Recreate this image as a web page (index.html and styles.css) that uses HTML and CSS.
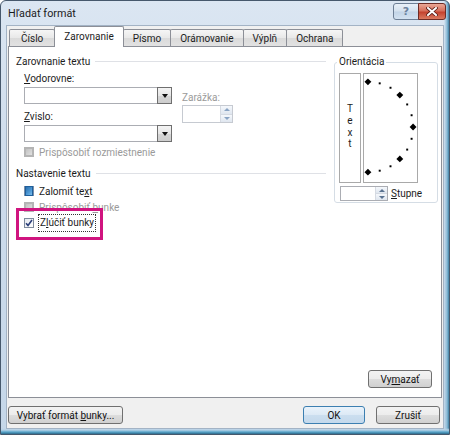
FILE: index.html
```html
<!DOCTYPE html>
<html lang="sk">
<head>
<meta charset="utf-8">
<title>Hľadať formát</title>
<link rel="stylesheet" href="styles.css">
</head>
<body>
<div class="window">
  <div class="titlebar">
    <span class="title">Hľadať formát</span>
    <div class="caption-buttons">
      <span class="cap-btn help">?</span>
      <span class="cap-btn close">
        <svg width="12" height="9" viewBox="0 0 12 9">
          <path d="M2 1 L10 8 M10 1 L2 8" stroke="#5a1d17" stroke-width="3.6" stroke-linecap="square"/>
          <path d="M2 1 L10 8 M10 1 L2 8" stroke="#fff" stroke-width="2" stroke-linecap="square"/>
        </svg>
      </span>
    </div>
  </div>

  <div class="client">
    <div class="tabs">
      <span class="tab">Číslo</span>
      <span class="tab active">Zarovnanie</span>
      <span class="tab">Písmo</span>
      <span class="tab">Orámovanie</span>
      <span class="tab">Výplň</span>
      <span class="tab">Ochrana</span>
    </div>

    <div class="panel">
      <div class="panel-main">
        <div class="left">
          <div class="group-head"><span>Zarovnanie textu</span></div>
          <div class="align-block">
            <div class="align-col">
              <span class="field-label"><u>V</u>odorovne:</span>
              <div class="combo"><span class="combo-field"></span><span class="combo-btn"><i class="tri"></i></span></div>
              <span class="field-label gap"><u>Z</u>vislo:</span>
              <div class="combo"><span class="combo-field"></span><span class="combo-btn"><i class="tri"></i></span></div>
            </div>
            <div class="indent-col">
              <span class="field-label disabled">Zarážka:</span>
              <div class="spin disabled-spin"><span class="spin-field"></span><span class="spin-btns"><i class="up"></i><i class="down"></i></span></div>
            </div>
          </div>
          <div class="check disabled first-check"><span class="cb indet"></span><span>Prispôsobiť rozmiestnenie</span></div>

          <div class="group-head second"><span>Nastavenie textu</span></div>
          <div class="check c1"><span class="cb indet blue"></span><span>Zalomiť te<u>x</u>t</span></div>
          <div class="check c2 disabled"><span class="cb indet"></span><span>Prispôsobiť <u>b</u>unke</span></div>
          <div class="check c2 marked">
            <span class="cb checked">
              <svg width="8" height="8" viewBox="0 0 8 8"><path d="M1 4.2 L3 6.4 L7 1" fill="none" stroke="#2b3f7a" stroke-width="1.6"/></svg>
            </span>
            <span class="focus">Z<u>l</u>účiť bunky</span>
            <span class="highlight"></span>
          </div>
        </div>

        <fieldset class="orient">
          <legend>Orientácia</legend>
          <div class="orient-boxes">
            <div class="vtext"><span>T</span><span>e</span><span>x</span><span>t</span></div>
            <div class="dial">
              <svg width="54" height="108" viewBox="0 0 54 108">
                <g fill="#000">
                  <path d="M4 3.5 L7.5 7 L4 10.5 L0.5 7 Z"/>
                  <path d="M36.5 17 L40 20.5 L36.5 24 L33 20.5 Z"/>
                  <path d="M50 49.5 L53.5 53 L50 56.5 L46.5 53 Z"/>
                  <path d="M36.5 82 L40 85.5 L36.5 89 L33 85.5 Z"/>
                  <path d="M4 95.5 L7.5 99 L4 102.5 L0.5 99 Z"/>
                  <rect x="15" y="7.5" width="2" height="2"/>
                  <rect x="26" y="12" width="2" height="2"/>
                  <rect x="43" y="29" width="2" height="2"/>
                  <rect x="47.5" y="40" width="2" height="2"/>
                  <rect x="47.5" y="64" width="2" height="2"/>
                  <rect x="43" y="75" width="2" height="2"/>
                  <rect x="26" y="92" width="2" height="2"/>
                  <rect x="15" y="96.5" width="2" height="2"/>
                </g>
              </svg>
            </div>
          </div>
          <div class="degree-row">
            <div class="spin"><span class="spin-field"></span><span class="spin-btns"><i class="up"></i><i class="down"></i></span></div>
            <span><u>S</u>tupne</span>
          </div>
        </fieldset>
      </div>

      <div class="panel-foot">
        <button class="btn clear"><span>Vy<u>m</u>azať</span></button>
      </div>
    </div>

    <div class="dialog-buttons">
      <button class="btn pick"><span>Vybrať formát <u>b</u>unky...</span></button>
      <span class="spacer"></span>
      <button class="btn ok"><span>OK</span></button>
      <button class="btn cancel"><span>Zrušiť</span></button>
    </div>
  </div>
</div>
</body>
</html>
```

FILE: styles.css
```css
* { box-sizing: border-box; }

html, body {
  margin: 0;
  padding: 0;
}

body {
  width: 450px;
  height: 435px;
  overflow: hidden;
  font-family: Roboto, "Noto Sans", sans-serif;
  font-size: 10px;
  color: #1c1c1c;
  background: #fff;
}

u { text-decoration: underline; text-underline-offset: 1px; }

/* ---------- window frame ---------- */
.window {
  width: 450px;
  height: 435px;
  border: 1px solid #46586c;
  border-radius: 6px 6px 0 0;
  display: flex;
  flex-direction: column;
  overflow: hidden;
  background:
    linear-gradient(to top, #2d6989 0, #58a6cb 2px, #b7d2e6 4px, rgba(183, 210, 230, 0) 6px),
    linear-gradient(to left, #3f7fa2 0, #8cbcd8 2px, rgba(140, 188, 216, 0) 5px),
    linear-gradient(to bottom, #dbe6f2, #cddbeb 40%, #c5d7e9);
}

.titlebar {
  height: 24px;
  flex: none;
  display: flex;
  align-items: center;
  padding-left: 7px;
}

.title {
  font-size: 10.8px;
  color: #1b1b1b;
}

.caption-buttons {
  margin-left: auto;
  align-self: flex-start;
  margin-top: 2px;
  margin-right: 3px;
  display: flex;
}

.cap-btn {
  height: 17px;
  display: flex;
  align-items: center;
  justify-content: center;
  border: 1px solid #6d7f95;
}

.help {
  width: 26px;
  border-radius: 3px 0 0 3px;
  background: linear-gradient(#e8f0f8, #d4e1ee 48%, #c2d4e7 52%, #d3e2f1);
  color: #6b819e;
  font-weight: bold;
  font-size: 11px;
  font-family: "DejaVu Sans", sans-serif;
}

.close {
  width: 28px;
  margin-left: -1px;
  border-color: #6e2c25;
  border-radius: 0 3px 3px 0;
  background: linear-gradient(#eaa897, #d66f5b 45%, #c4432f 55%, #da7a60);
}

/* ---------- client area ---------- */
.client {
  flex: 1;
  margin: 0 5px 5px;
  border: 1px solid #a3b3c5;
  background: #f0f0f0;
  display: flex;
  flex-direction: column;
}

.tabs {
  height: 20px;
  flex: none;
  display: flex;
  align-items: flex-end;
  padding-left: 2px;
}

.tab {
  height: 17px;
  padding: 0 9px;
  border: 1px solid #8c8f97;
  border-bottom: none;
  margin-right: -1px;
  border-radius: 2px 2px 0 0;
  background: linear-gradient(#f6f6f6, #e8e8e8 50%, #dadada 51%, #e2e2e2);
  display: flex;
  align-items: center;
}

.tab:first-child { padding: 0 11px; }

.tab.active {
  height: 21px;
  margin-bottom: -1px;
  padding: 0 9px 2px;
  background: #fff;
  position: relative;
  z-index: 1;
}

.panel {
  flex: none;
  height: 352px;
  margin: 0 1px;
  border: 1px solid #8c8f97;
  background: #fff;
  display: flex;
  flex-direction: column;
  padding: 7px 3px 7px 7px;
}

.panel-main {
  display: flex;
  align-items: flex-start;
  gap: 8px;
}

.left {
  width: 310px;
}

.group-head {
  display: flex;
  align-items: center;
  height: 14px;
  gap: 5px;
}

.group-head::after {
  content: "";
  flex: 1;
  border-top: 1px solid #dfe1e6;
}

.group-head.second { margin-top: 7px; }

.align-block {
  display: flex;
  gap: 10px;
  padding-left: 8px;
  margin-top: 4px;
}

.align-col {
  width: 148px;
  display: flex;
  flex-direction: column;
}

.field-label {
  height: 14px;
  line-height: 14px;
}

.field-label.gap { margin-top: 6px; }

.disabled { color: #9a9a9a; }

.combo {
  height: 17px;
  margin-top: 1px;
  display: flex;
}

.combo-field {
  flex: 1;
  border: 1px solid #abadb3;
  border-right: none;
  background: #fff;
}

.combo-btn {
  width: 15px;
  border: 1px solid #6f6f6f;
  background: linear-gradient(#f4f4f4, #e6e6e6 50%, #d6d6d6 51%, #cdcdcd);
  display: flex;
  align-items: center;
  justify-content: center;
}

.tri {
  width: 0;
  height: 0;
  border-left: 3.5px solid transparent;
  border-right: 3.5px solid transparent;
  border-top: 4px solid #111;
}

.indent-col {
  width: 51px;
  padding-top: 19px;
  display: flex;
  flex-direction: column;
}

/* spinner (number field with up/down buttons) */
.spin {
  height: 18px;
  display: flex;
  border: 1px solid #c6cad1;
  background: #fff;
}

.spin-field { flex: 1; }

.spin-btns {
  width: 12px;
  display: flex;
  flex-direction: column;
  border-left: 1px solid #d5dae2;
}

.spin-btns i {
  flex: 1;
  display: flex;
  align-items: center;
  justify-content: center;
  background: linear-gradient(#f5f8fc, #dfe6ef);
}

.spin-btns i + i { border-top: 1px solid #d5dae2; }

.spin-btns .up::before,
.spin-btns .down::before {
  content: "";
  border-left: 3px solid transparent;
  border-right: 3px solid transparent;
}

.spin-btns .up::before { border-bottom: 3px solid #5a7391; }
.spin-btns .down::before { border-top: 3px solid #5a7391; }

.disabled-spin .up::before { border-bottom-color: #8aa4c4; }
.disabled-spin .down::before { border-top-color: #8aa4c4; }

/* ---------- check boxes ---------- */
.check {
  display: flex;
  align-items: center;
  gap: 5px;
  height: 14px;
  padding-left: 8px;
  position: relative;
}

.check.first-check { margin-top: 3px; }
.check.c1 { margin-top: 4px; }
.check.c2 { margin-top: 2px; }

.cb {
  width: 10px;
  height: 10px;
  flex: none;
  border: 1px solid #8e8f8f;
  background: linear-gradient(135deg, #dadada, #fdfdfd);
  display: flex;
  align-items: center;
  justify-content: center;
}

.cb.indet::after {
  content: "";
  width: 6px;
  height: 6px;
  background: linear-gradient(135deg, #c2c2c2, #e0e0e0);
  border: 1px solid #b5b5b5;
}

.cb.indet.blue {
  border-color: #7b8fa8;
}

.cb.indet.blue::after {
  width: 8px;
  height: 8px;
  border-color: #1f5f9c;
  background: linear-gradient(135deg, #2b6fae, #4f9ad6 60%, #7dbde8);
}

.check.disabled .cb { border-color: #b4b4b4; }

.cb.checked {
  border-color: #7d8a9c;
  background: linear-gradient(135deg, #e4e8ee, #ffffff);
}

.focus {
  outline: 1px dotted #333;
  outline-offset: 0;
  padding: 1px 1px 2px;
  line-height: 13px;
}

.highlight {
  position: absolute;
  left: 0;
  top: -8px;
  width: 87px;
  height: 32px;
  border: 3px solid #d0147f;
}

/* ---------- orientation ---------- */
.orient {
  width: 104px;
  min-width: 0;
  margin: 1px 0 0;
  padding: 4px 4px 1px 4px;
  border: 1px solid #d5dde5;
  border-radius: 3px;
}

.orient legend {
  padding: 0 2px;
  margin-left: -2px;
  height: 14px;
  line-height: 14px;
}

.orient-boxes {
  display: flex;
  gap: 2px;
}

.vtext {
  width: 22px;
  height: 110px;
  border: 1px solid #a9a9a9;
  display: flex;
  flex-direction: column;
  align-items: center;
  justify-content: center;
  line-height: 11.7px;
  padding-bottom: 3px;
}

.dial {
  width: 55px;
  height: 110px;
  border: 1px solid #a9a9a9;
  display: flex;
  align-items: center;
}

.dial svg { display: block; }

.degree-row {
  margin-top: 3px;
  display: flex;
  align-items: center;
  gap: 3px;
}

.degree-row .spin {
  width: 48px;
  height: 15px;
  margin-left: 1px;
  border-color: #abadb3;
}

/* ---------- buttons ---------- */
.btn {
  height: 18px;
  padding: 0;
  border: 1px solid #707070;
  border-radius: 3px;
  background: linear-gradient(#f3f3f3, #ececec 50%, #dddddd 51%, #d0d0d0);
  font: inherit;
  color: #111;
  display: flex;
  align-items: center;
  justify-content: center;
}

.panel-foot {
  margin-top: auto;
  display: flex;
  justify-content: flex-end;
  padding-right: 6px;
  padding-bottom: 2px;
}

.btn.clear { width: 64px; }

.dialog-buttons {
  flex: 1;
  display: flex;
  align-items: flex-start;
  padding: 8px 3px 0 1px;
}

.spacer { flex: 1; }

.btn.pick { width: 115px; }

.btn.ok {
  width: 62px;
  border-color: #3c7fb1;
  background: linear-gradient(#eaf3fb, #dce9f5 50%, #cbdeef 51%, #c4d9ec);
}

.btn.cancel {
  width: 64px;
  margin-left: 11px;
}
```
